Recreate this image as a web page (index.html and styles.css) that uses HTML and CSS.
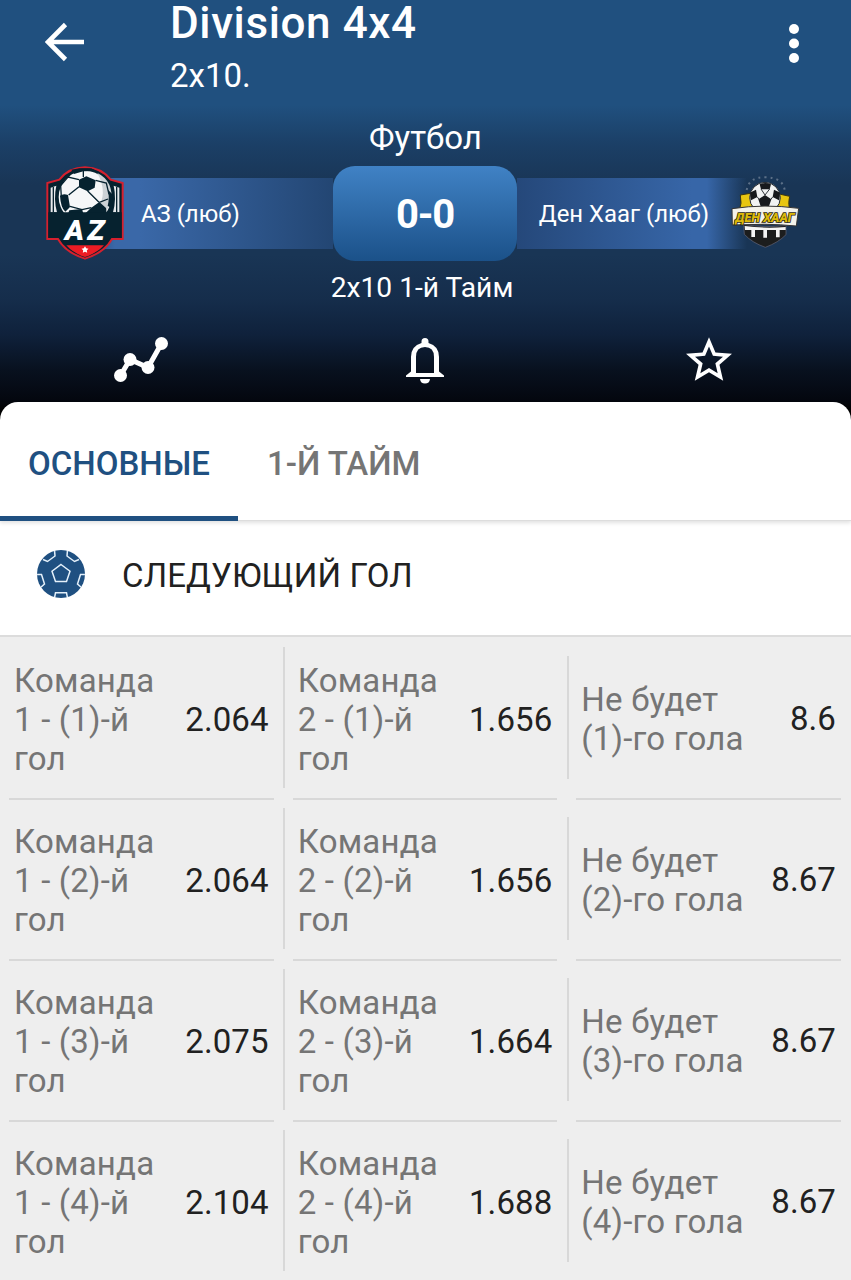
FILE: index.html
```
<!DOCTYPE html>
<html lang="ru">
<head>
  <meta charset="UTF-8">
  <meta name="viewport" content="width=device-width, initial-scale=1.0">
  <title>Division 4x4</title>
  <link rel="stylesheet" href="styles.css">
</head>
<body>
  <header class="header">
    <div class="toolbar">
      <svg class="icon-back" viewBox="0 0 40 40"><path d="M39 20H4M20.500 2.500L3 20l17.500 17.500" fill="none" stroke="#fff" stroke-width="4.600"/></svg>
      <div class="heading">
        <h1 class="title">Division 4x4</h1>
        <p class="subtitle">2x10.</p>
      </div>
      <svg class="icon-more" viewBox="0 0 12 40"><g fill="#fff"><circle cx="6" cy="6" r="5"/><circle cx="6" cy="20.500" r="5"/><circle cx="6" cy="35" r="5"/></g></svg>
    </div>

    <p class="sport">Футбол</p>

    <div class="match">
      <div class="team home">
        <svg class="badge-az" viewBox="0 0 246 294">
          <path d="M10 152V60l36-10q28-36 77-37q49 1 77 37l36 10v92v76h-32q-22 40-81 59q-59-19-81-59H10z" fill="#06222f" stroke="#d5202e" stroke-width="6"/>
          <path d="M20 74l17-6q-9 40 2 80H20zM226 74l-17-6q9 40-2 80h19z" fill="#e6e9ec"/>
          <path d="M28 72v76M218 72v76" stroke="#06222f" stroke-width="4"/>
          <clipPath id="az"><path d="M30 10h186v140H30z"/></clipPath>
          <g clip-path="url(#az)">
            <circle cx="123" cy="102" r="79" fill="#f6f7f8"/>
            <path d="M160 30q50 24 42 90l-20 30-24-8q36-50 2-112z" fill="#ccd2d6"/>
            <path d="M105 50l22-10 28 12-3 22-21 11-26-12zM48 98q10-8 24-2l6 36-14 14q-14-12-16-48zM142 134l24-17 20 18 2 16h-64zM82 20l24-4h36l16 8-40 1-28 8zM192 80l13 14v44l-14-10q6-22 1-48zM76 142l38-4 4 14H72z" fill="#06222f"/>
            <path d="M105 71l-31 25M131 84l34 34M78 130l36 10 28-6M105 50L72 42 50 68M50 68l2 34M155 52l32 8 8 34M166 118l26-10M118 24v18M72 42l12-14" fill="none" stroke="#06222f" stroke-width="4"/>
          </g>
          <path d="M13 148h220v77H13z" fill="#06222f"/>
          <path d="M67 247h113q-22 24-57 35q-35-11-56-35z" fill="#ec1c24"/>
          <path d="M123 250l3.500 6 7 1-5 5 1 7-6.500-3-6.500 3 1-7-5-5 7-1z" fill="#fff"/>
          <text class="az-text" x="62" y="230" textLength="58" lengthAdjust="spacingAndGlyphs">A</text>
          <text class="az-text" x="130" y="230" textLength="52" lengthAdjust="spacingAndGlyphs">Z</text>
        </svg>
        <span class="team-name">АЗ (люб)</span>
      </div>
      <div class="score">0-0</div>
      <div class="team away">
        <span class="team-name">Ден Хааг (люб)</span>
        <svg class="badge-dh" viewBox="45 30 210 222">
          <path d="M95 75q8-40 56-38q52 0 58 38" fill="none" stroke="#5c7088" stroke-width="6" stroke-dasharray="6 12"/>
          <path d="M76 90l36-6v52l-40 2q10-22 4-48zM224 94l-36-8v48l38 4q-8-18-2-44z" fill="#e8c610" stroke="#3b3510" stroke-width="3"/>
          <circle cx="150" cy="98" r="46" fill="#f1f2f2" stroke="#20252a" stroke-width="3"/>
          <path d="M134 58q16-8 34 0l-4 15h-26zM150 90l19 13-7 21h-25l-7-21zM107 82l16-8 4 22-19 10q-4-12-1-24zM193 82l-16-8-4 22 19 10q4-12 1-24z" fill="#17191c"/>
          <path d="M138 72l12 18 14-18M127 96l6 8M173 96l-6 8" fill="none" stroke="#30353a" stroke-width="3"/>
          <path d="M86 178q65 12 127 3v28q-22 23-62 38q-40-14-63-39z" fill="#1c1d1d" stroke="#667" stroke-width="2"/>
          <path d="M89 183q60 8 123 3v9h-18v22h-11v-22h-27v23h-11v-23h-25v21h-11v-21H90z" fill="#f4f4f4"/>
          <path d="M51 131q98-15 200-1l-7 53q-93-9-192-3z" fill="#f4f2ea" stroke="#343434" stroke-width="3"/>
          <text class="dh-text" x="150" y="171" textLength="178" lengthAdjust="spacingAndGlyphs">ДЕН ХААГ</text>
        </svg>
      </div>
    </div>

    <p class="period">2x10 1-й Тайм</p>

    <div class="actions">
      <svg class="icon-chart" viewBox="0 0 54 48"><path d="M6.500 38.500L16 22.500 34 30.500 47.500 6.500" fill="none" stroke="#fff" stroke-width="5"/><g fill="#fff"><circle cx="6.500" cy="38.500" r="6.500"/><circle cx="16" cy="22.500" r="6.500"/><circle cx="34" cy="30.500" r="6.500"/><circle cx="47.500" cy="6.500" r="6.500"/></g></svg>
      <svg class="icon-bell" viewBox="0 0 38 48"><path d="M15.500 6V4.500a3.500 3.500 0 0 1 7 0V6Q33 9 33 20v14.500l5 4V40H0v-1.500l5-4V20Q5 9 15.500 6zM10 36h18V20q0-10-9-10t-9 10zM14 42h10q-.5 4.500-5 4.500T14 42z" fill="#fff" fill-rule="evenodd"/></svg>
      <svg class="icon-star" viewBox="2 2 20 19"><path d="M22 9.240l-7.190-.62L12 2 9.190 8.630 2 9.240l5.460 4.730L5.820 21 12 17.270 18.180 21l-1.630-7.030L22 9.240zM12 15.400l-3.760 2.270 1-4.280-3.320-2.880 4.380-.38L12 6.100l1.710 4.040 4.380.38-3.320 2.880 1 4.280L12 15.400z" fill="#fff"/></svg>
    </div>
  </header>

  <main class="sheet">
    <nav class="tabs">
      <a class="tab active">ОСНОВНЫЕ</a>
      <a class="tab">1-Й ТАЙМ</a>
    </nav>

    <div class="market">
      <svg class="icon-ball" viewBox="0 0 48 48">
        <clipPath id="ball"><circle cx="24" cy="24" r="24"/></clipPath>
        <circle cx="24" cy="24" r="24" fill="#1f5081"/>
        <g clip-path="url(#ball)" fill="none" stroke="#e4f0fa" stroke-width="1.500">
          <path d="M24 14.500l9 6.700-3.500 10.300H18.500L15 21.200z"/>
          <path d="M17.500 0l.5 6-7.500 5.500-4.500-2M30.500 0l-.5 6 7.500 5.500 4.500-2M0 24.500l4.500 0 3 9.500-4.500 4M48 24.500l-4.500 0-3 9.500 4.500 4M17.500 48l1-5.200h11l1 5.200"/>
        </g>
      </svg>
      <h2 class="market-title">СЛЕДУЮЩИЙ ГОЛ</h2>
    </div>

    <div class="odds">
      <div class="cell"><span class="label">Команда<br>1 - (1)-й<br>гол</span><span class="value">2.064</span></div>
      <div class="cell"><span class="label">Команда<br>2 - (1)-й<br>гол</span><span class="value">1.656</span></div>
      <div class="cell"><span class="label">Не будет<br>(1)-го гола</span><span class="value">8.6</span></div>

      <div class="cell"><span class="label">Команда<br>1 - (2)-й<br>гол</span><span class="value">2.064</span></div>
      <div class="cell"><span class="label">Команда<br>2 - (2)-й<br>гол</span><span class="value">1.656</span></div>
      <div class="cell"><span class="label">Не будет<br>(2)-го гола</span><span class="value">8.67</span></div>

      <div class="cell"><span class="label">Команда<br>1 - (3)-й<br>гол</span><span class="value">2.075</span></div>
      <div class="cell"><span class="label">Команда<br>2 - (3)-й<br>гол</span><span class="value">1.664</span></div>
      <div class="cell"><span class="label">Не будет<br>(3)-го гола</span><span class="value">8.67</span></div>

      <div class="cell"><span class="label">Команда<br>1 - (4)-й<br>гол</span><span class="value">2.104</span></div>
      <div class="cell"><span class="label">Команда<br>2 - (4)-й<br>гол</span><span class="value">1.688</span></div>
      <div class="cell"><span class="label">Не будет<br>(4)-го гола</span><span class="value">8.67</span></div>
    </div>
  </main>
</body>
</html>
```

FILE: styles.css
```
:root {
  --primary: #1f5081;
  --text: #212121;
  --text-secondary: #757575;
  --line: #d8d8d8;
}

* {
  box-sizing: border-box;
}

body {
  margin: 0;
  height: 1280px;
  overflow: hidden;
  background: #eee;
  color: var(--text);
  font-family: Roboto, "Noto Sans", sans-serif;
}

h1, h2, p {
  margin: 0;
  font-weight: 400;
}

svg {
  display: block;
  flex: none;
}

/* header */
.header {
  height: 422px;
  color: #fff;
  background: linear-gradient(#20507f 0, #20507f 105px, #1b3f66 145px, #193555 185px, #193555 255px, #152d4b 300px, #0f213b 335px, #08111f 370px, #04070f 400px, #000 410px);
}

.toolbar {
  display: flex;
  height: 118px;
  padding: 0 51px 0 45px;
}

.icon-back {
  width: 40px;
  height: 40px;
  margin-top: 22px;
}

.heading {
  flex: 1;
  margin-left: 85px;
}

.title {
  height: 48px;
  font-size: 44px;
  font-weight: 500;
  letter-spacing: 0.6px;
  line-height: 47px;
}

.subtitle {
  font-size: 33px;
  line-height: 39px;
  margin-top: 8px;
}

.icon-more {
  width: 12px;
  height: 40px;
  margin-top: 23px;
}

.sport {
  height: 48px;
  font-size: 33px;
  line-height: 40px;
  text-align: center;
}

.match {
  display: flex;
  align-items: center;
  height: 95px;
}

.team {
  display: flex;
  align-items: center;
  flex: none;
  height: 71px;
  font-size: 23.9px;
}

.home {
  width: 333px;
  padding-left: 44px;
  background: linear-gradient(90deg, transparent 70px, #3a68a8 115px, #3a68a8 140px, #234673 100%);
}

.away {
  width: 334px;
  justify-content: flex-end;
  padding-right: 51px;
  background: linear-gradient(90deg, #25487a 0, #3766a8 175px, #3766a8 190px, transparent 230px);
}

.home .team-name {
  margin-left: 15px;
}

.away .team-name {
  margin-right: 21px;
}

.score {
  width: 184px;
  height: 95px;
  border-radius: 22px;
  background: linear-gradient(#4082c5, #1b5189);
  font-size: 40px;
  font-weight: 700;
  letter-spacing: -1.2px;
  line-height: 98px;
  text-align: center;
}

.badge-az {
  width: 82px;
  height: 98px;
  margin-bottom: 3px;
}

.badge-dh {
  width: 70px;
  height: 74px;
  margin-bottom: 3px;
}

.az-text {
  fill: #fff;
  font: italic 900 82px Roboto, sans-serif;
}

.dh-text {
  fill: #dcb90a;
  stroke: #2a2613;
  stroke-width: 5px;
  paint-order: stroke;
  font: italic 900 40px Roboto, sans-serif;
  text-anchor: middle;
}

.period {
  height: 76px;
  padding-top: 9px;
  font-size: 28.2px;
  line-height: 36px;
  text-align: center;
  padding-right: 7px;
}

.actions {
  display: flex;
  justify-content: space-between;
  padding: 0 119px 0 114px;
}

.icon-chart {
  width: 54px;
  height: 48px;
}

.icon-bell {
  width: 38px;
  height: 48px;
  margin: 0 5px 0 0;
}

.icon-star {
  width: 46px;
  height: 44px;
}

/* content */
.sheet {
  margin-top: -20px;
  border-radius: 18px 18px 0 0;
  background: #fff;
}

.tabs {
  display: flex;
  height: 119px;
  border-bottom: 1px solid #ddd;
  box-shadow: 0 2px 4px rgba(0, 0, 0, 0.12);
}

.tab {
  padding: 42px 29px 0;
  height: 119px;
  color: var(--text-secondary);
  font-size: 33px;
  font-weight: 500;
  line-height: 39px;
}

.tab.active {
  width: 238px;
  padding-left: 28px;
  padding-right: 0;
  border-bottom: 5px solid var(--primary);
  color: var(--primary);
}

.market {
  display: flex;
  align-items: center;
  height: 116px;
  padding: 0 37px 8px;
  border-bottom: 2px solid #dcdcdc;
}

.icon-ball {
  width: 48px;
  height: 48px;
}

.market-title {
  margin: 3px 0 0 37px;
  font-size: 33px;
  letter-spacing: 0.15px;
  line-height: 40px;
}

.odds {
  display: grid;
  grid-template-columns: repeat(3, 1fr);
  grid-auto-rows: 161px;
  background: #eee;
}

.cell {
  position: relative;
  display: flex;
  align-items: center;
  justify-content: space-between;
  padding: 3px 15px 0 14px;
  font-size: 33px;
  line-height: 39px;
}

.label {
  color: var(--text-secondary);
  letter-spacing: 0.2px;
}

.value {
  letter-spacing: 0.1px;
}

.cell:nth-child(3n) .value {
  margin-top: -2px;
}

/* short dividers between the cells */
.cell::before {
  content: "";
  position: absolute;
  left: 9px;
  right: 10px;
  bottom: -2px;
  height: 2px;
  background: var(--line);
}

.cell::after {
  content: "";
  position: absolute;
  left: -1px;
  top: 10px;
  bottom: 10px;
  width: 2px;
  background: var(--line);
}

.cell:nth-child(3n+1)::after {
  display: none;
}

.cell:nth-child(3n)::after {
  left: 0;
  top: 19px;
  bottom: 19px;
}
```
